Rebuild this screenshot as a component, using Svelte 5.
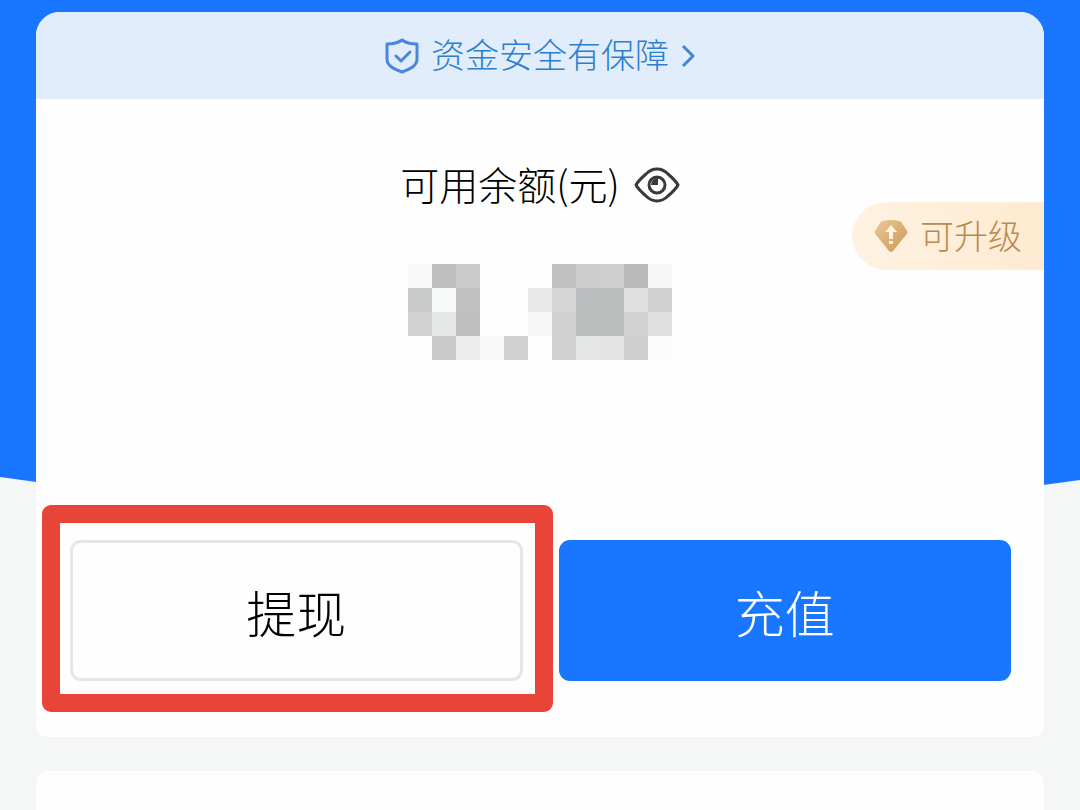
<script>
    // masked amount, one colour per cell
    const mosaic = [
        ["#f7f8f7", "#bfbfbf", "#cbcbcb", "", "", "", "#c0c0c0", "#cdcdcd", "#cfcfcf", "#bababa", "#f6f6f6"],
        ["#c8caca", "#f8f9f9", "#c0c0c0", "", "", "#e9e9e9", "#d6d6d6", "#bcbfbf", "#bcbdbd", "#e0e0e0", "#d0d0d0"],
        ["#d2d3d2", "#e6e7e7", "#bfbfbf", "", "", "#f7f7f7", "#d0d0d0", "#bcbfbe", "#bcbdbd", "#d3d3d3", "#e0e0e0"],
        ["", "#cacaca", "#ececec", "#f9f9f9", "#d0d0d0", "", "#d0d0d0", "#e4e6e6", "#e4e4e4", "#cecece", "#fcfcfc"],
    ];
</script>

<main class="page">
    <svg class="hero" viewBox="0 0 1080 540" preserveAspectRatio="none" aria-hidden="true">
        <path d="M0 0H1080V480Q540 556 0 477Z" fill="#1977ff" />
    </svg>

    <section class="card">
        <a class="safety" href="#safety">
            <svg width="34" height="36" viewBox="0 0 34 36" fill="none" stroke="#4a86dc" stroke-width="3" stroke-linecap="round" stroke-linejoin="round">
                <path d="M17 2C13 5 8 6 2 6V21C2 28 9 31 17 34C25 31 32 28 32 21V6C26 6 21 5 17 2Z" />
                <path d="M11 18L16 23L25 14" />
            </svg>
            <span>资金安全有保障</span>
            <svg width="14" height="24" viewBox="0 0 14 24" fill="none" stroke="#3f86d6" stroke-width="3" stroke-linejoin="round">
                <path d="M2 2L12 12L2 22" />
            </svg>
        </a>

        <div class="balance">
            <h1 class="label">可用余额(元)</h1>
            <button class="eye" type="button" aria-label="显示余额">
                <svg width="46" height="36" viewBox="0 0 46 36" fill="none" stroke="#3a3a3a" stroke-width="3">
                    <path d="M2 18Q4 14 12 7Q17 2 23 2Q29 2 34 7Q42 14 44 18Q42 22 34 29Q29 34 23 34Q17 34 12 29Q4 22 2 18Z" stroke-linejoin="round" />
                    <circle cx="23" cy="18" r="8" />
                    <path d="M24 18V11A7 7 0 0 0 17 18Z" fill="#3a3a3a" stroke="none" />
                </svg>
            </button>
        </div>

        <div class="mosaic" role="img" aria-label="余额">
            {#each mosaic as row}
                {#each row as color}
                    <i style:background={color || "transparent"}></i>
                {/each}
            {/each}
        </div>

        <div class="actions">
            <div class="marked">
                <button class="btn" type="button">提现</button>
                <div class="frame"></div>
            </div>
            <button class="btn primary" type="button">充值</button>
        </div>

        <button class="upgrade" type="button">
            <svg width="34" height="32" viewBox="0 0 34 32">
                <defs>
                    <linearGradient id="gem" x1="0" y1="0" x2="1" y2="1">
                        <stop offset="0" stop-color="#e9c99a" />
                        <stop offset="1" stop-color="#cc9757" />
                    </linearGradient>
                </defs>
                <path d="M9 1Q17 -1 25 1Q27 1 28 3L33 11Q34 13 32 15L19 31Q17 33 15 31L2 15Q0 13 1 11L6 3Q7 1 9 1Z" fill="url(#gem)" />
                <path d="M17 5L23 12H19V19H15V12H11ZM15 21H19V24H15Z" fill="#fff3e0" />
            </svg>
            <span>可升级</span>
        </button>
    </section>

    <section class="card next"></section>
</main>

<style>
    :global(body) {
        margin: 0;
        background: #f5f6f6;
    }
    .page {
        position: relative;
        box-sizing: border-box;
        min-height: 100vh;
        padding: 12px 36px 0;
        display: flex;
        flex-direction: column;
        gap: 34px;
        background: #f5f6f6;
        font-family: KaiTi, "Noto Sans CJK SC", sans-serif;
        font-weight: 300;
    }
    .hero {
        position: absolute;
        top: 0;
        left: 0;
        width: 100%;
        height: 540px;
    }
    .card {
        position: relative;
        background: #fefefe;
        border-radius: 24px 24px 12px 12px;
        overflow: hidden;
    }
    .next {
        flex: 1;
        border-radius: 12px 12px 0 0;
    }
    button {
        margin: 0;
        padding: 0;
        border: none;
        background: none;
        font: inherit;
        color: inherit;
        cursor: pointer;
    }
    svg {
        display: block;
        flex: none;
    }
    .safety {
        display: flex;
        justify-content: center;
        align-items: center;
        gap: 12px;
        height: 87px;
        background: #e2edfc;
        color: #2c7fd0;
        font-size: 34px;
        line-height: 40px;
        text-decoration: none;
    }
    .safety span,
    .label,
    .upgrade span {
        padding-bottom: 4px;
    }
    .balance {
        display: flex;
        justify-content: center;
        align-items: center;
        gap: 14px;
        margin-top: 62px;
        height: 48px;
    }
    .label {
        margin: 0;
        color: #000;
        font-size: 39px;
        font-weight: 300;
        line-height: 48px;
    }
    .mosaic {
        display: grid;
        grid-template-columns: repeat(11, 24px);
        grid-auto-rows: 24px;
        justify-content: center;
        margin-top: 55px;
    }
    .actions {
        display: grid;
        grid-template-columns: 1fr 1fr;
        gap: 36px;
        padding: 180px 33px 56px 34px;
    }
    .marked {
        position: relative;
    }
    .btn {
        box-sizing: border-box;
        width: 100%;
        height: 141px;
        border: 3px solid #e5e6e8;
        border-radius: 11px;
        background: #fefefe;
        color: #000;
        font-size: 50px;
    }
    .primary {
        border-color: #1977ff;
        background: #1977ff;
        color: #fff;
    }
    .frame {
        position: absolute;
        inset: -35px -30px -31px -28px;
        border: 18px solid #e84538;
        border-radius: 9px;
        pointer-events: none;
    }
    .upgrade {
        position: absolute;
        top: 190px;
        right: 0;
        display: flex;
        align-items: center;
        gap: 12px;
        height: 68px;
        padding: 0 22px;
        border-radius: 34px 0 0 34px;
        background: linear-gradient(90deg, #fff2e2, #feead0);
        color: #b98a50;
        font-size: 34px;
    }
</style>
